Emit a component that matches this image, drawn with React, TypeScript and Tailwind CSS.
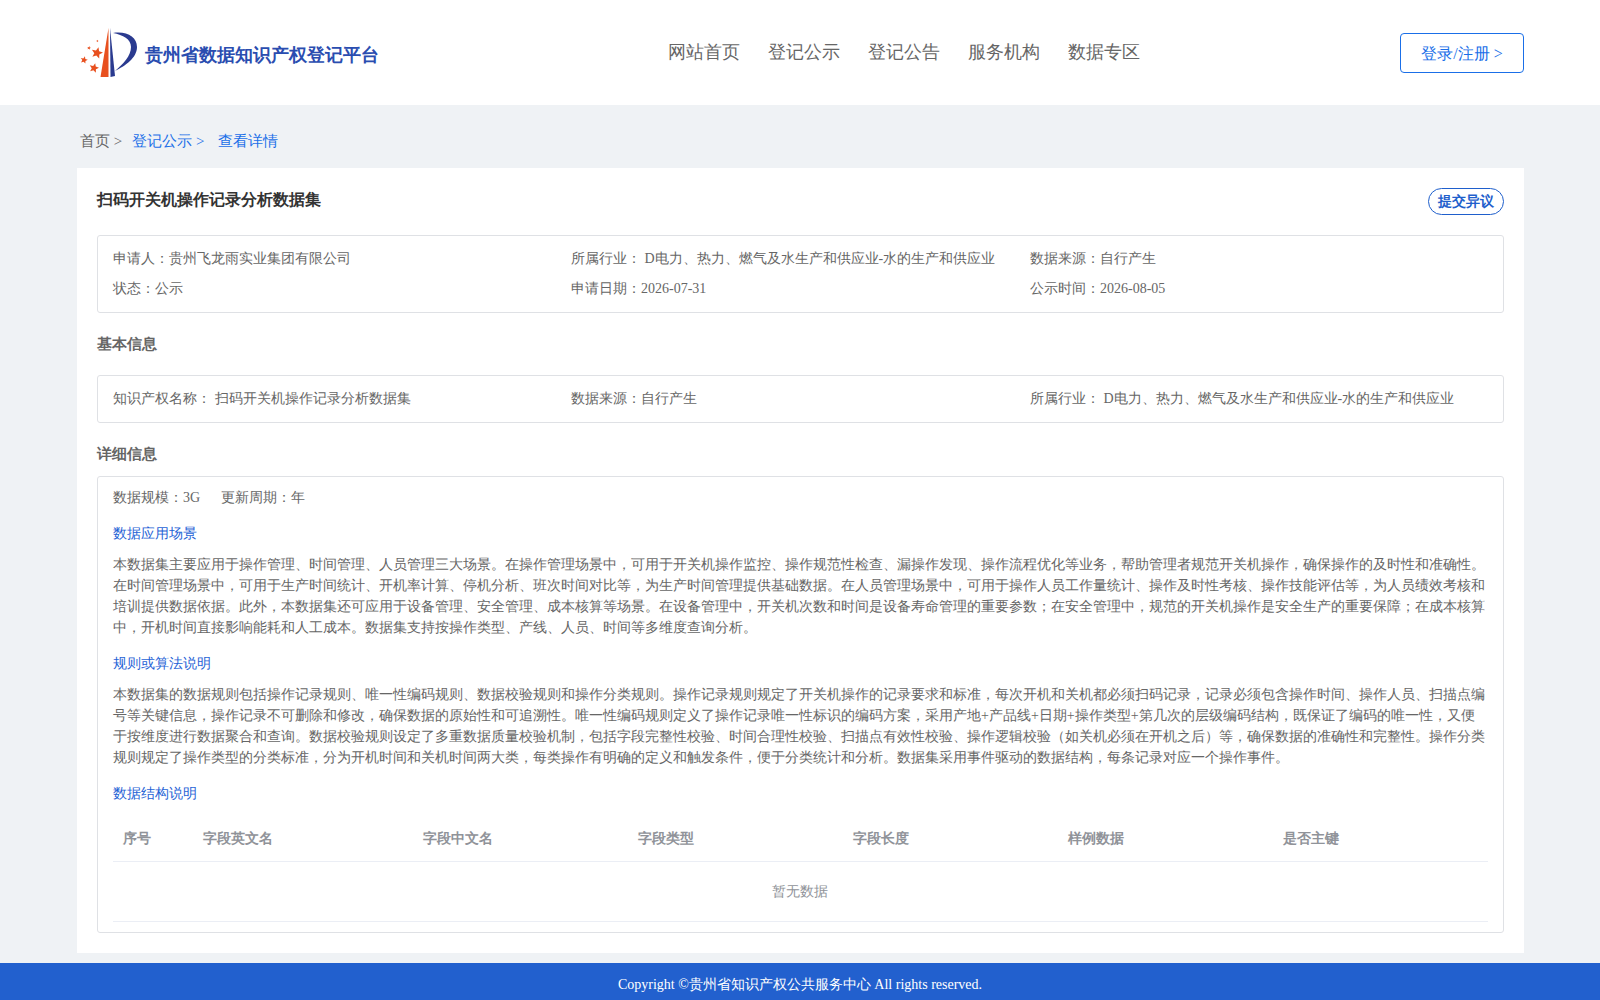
const SERIF = "font-['Liberation_Serif',serif]";

function Star({ cx, cy, r, fill = "#e8501f" }: { cx: number; cy: number; r: number; fill?: string }) {
  const pts = Array.from({ length: 10 }, (_, i) => {
    const a = -Math.PI / 2 + (i * Math.PI) / 5 + 0.25;
    const rad = i % 2 === 0 ? r : r * 0.45;
    return `${(cx + rad * Math.cos(a)).toFixed(2)},${(cy + rad * Math.sin(a)).toFixed(2)}`;
  }).join(" ");
  return <polygon points={pts} fill={fill} />;
}

function Logo() {
  return (
    <svg width="60" height="54" viewBox="0 0 60 54" className="shrink-0">
      <Star cx={17} cy={26} r={6} />
      <Star cx={4} cy={33} r={3.8} />
      <Star cx={14} cy={41} r={5} />
      <Star cx={9} cy={21} r={2} />
      <Star cx={17.5} cy={14} r={1.3} />
      <path d="M28.5 1 L20.5 50 L28.5 50 Z" fill="#e8501f" />
      <path d="M30 1 L30.5 50 L35 49 Z" fill="#2a3a8f" />
      <path d="M33 6 C47 4 57 10 57 20 C57 31 45 39 35 44 C43 37 51 29 51 20 C51 12 43 8 33 6 Z" fill="#2a3a8f" />
    </svg>
  );
}

function Section({ children }: { children: React.ReactNode }) {
  return <div className="text-[14px] leading-[21px] text-[#1f63d6]">{children}</div>;
}

const columns = ["序号", "字段英文名", "字段中文名", "字段类型", "字段长度", "样例数据", "是否主键"];

export default function App() {
  return (
    <div className={`min-h-[1000px] h-[1000px] overflow-hidden bg-[#eff2f5] flex flex-col ${SERIF}`}>
      <header className="h-[105px] shrink-0 bg-white flex items-center justify-between pl-[80px] pr-[76px]">
        <div className="flex items-center gap-[5px] w-[330px] pt-[2px]">
          <Logo />
          <span className="text-[18px] font-bold text-[#2a4db0] leading-[26px] whitespace-nowrap pt-[3px]">贵州省数据知识产权登记平台</span>
        </div>
        <nav className="flex gap-[28px] text-[18px] text-[#666] mr-[2px] pb-[1px]">
          {["网站首页", "登记公示", "登记公告", "服务机构", "数据专区"].map((t) => (
            <span key={t}>{t}</span>
          ))}
        </nav>
        <button className="w-[124px] h-[40px] rounded-[4px] border border-[#1a6fe8] pt-[2px] text-[16px] text-[#1a6fe8] bg-white">登录/注册 &gt;</button>
      </header>

      <div className="mx-[76.5px] flex-1 flex flex-col">
        <div className="h-[63px] flex items-center pl-[3.5px] text-[15px] text-[#1a6fe8] whitespace-nowrap pt-[10px]">
          <span className="text-[#666] mr-[10px]">首页 &gt;</span>
          <span className="mr-[14px]">登记公示 &gt;</span>
          <span>查看详情</span>
        </div>

        <main className="bg-white pl-[20.5px] pr-[20px] pt-[20px] h-[785px] text-[14px] text-[#666]">
          <div className="flex justify-between items-start h-[47px]">
            <h1 className="text-[16px] font-bold text-[#333] leading-[24px]">扫码开关机操作记录分析数据集</h1>
            <button className="h-[27px] w-[76px] rounded-[14px] border border-[#1f5fcc] text-[14px] font-bold text-[#1f5fcc] bg-white">提交异议</button>
          </div>

          <div className="border border-[#dfe1e5] rounded-[3px] px-[15px] py-[8px] h-[78px] grid grid-cols-[458px_459px_1fr] leading-[30px]">
            <div>申请人：贵州飞龙雨实业集团有限公司</div>
            <div>所属行业： D电力、热力、燃气及水生产和供应业-水的生产和供应业</div>
            <div>数据来源：自行产生</div>
            <div>状态：公示</div>
            <div>申请日期：2026-07-31</div>
            <div>公示时间：2026-08-05</div>
          </div>

          <h2 className="text-[15px] font-bold mt-[20px] mb-[20px] leading-[22px]">基本信息</h2>

          <div className="border border-[#dfe1e5] rounded-[3px] px-[15px] pb-[1px] h-[48px] grid grid-cols-[458px_459px_1fr] items-center">
            <div>知识产权名称： 扫码开关机操作记录分析数据集</div>
            <div>数据来源：自行产生</div>
            <div>所属行业： D电力、热力、燃气及水生产和供应业-水的生产和供应业</div>
          </div>

          <h2 className="text-[15px] font-bold mt-[20px] mb-[11px] leading-[22px]">详细信息</h2>

          <div className="border border-[#dfe1e5] rounded-[3px] px-[15px] h-[457px] leading-[21px]">
            <div className="flex gap-[21px] mt-[10px]">
              <span>数据规模：3G</span>
              <span>更新周期：年</span>
            </div>
            <div className="mt-[15px]"><Section>数据应用场景</Section></div>
            <p className="mt-[10px]">
              本数据集主要应用于操作管理、时间管理、人员管理三大场景。在操作管理场景中，可用于开关机操作监控、操作规范性检查、漏操作发现、操作流程优化等业务，帮助管理者规范开关机操作，确保操作的及时性和准确性。在时间管理场景中，可用于生产时间统计、开机率计算、停机分析、班次时间对比等，为生产时间管理提供基础数据。在人员管理场景中，可用于操作人员工作量统计、操作及时性考核、操作技能评估等，为人员绩效考核和培训提供数据依据。此外，本数据集还可应用于设备管理、安全管理、成本核算等场景。在设备管理中，开关机次数和时间是设备寿命管理的重要参数；在安全管理中，规范的开关机操作是安全生产的重要保障；在成本核算中，开机时间直接影响能耗和人工成本。数据集支持按操作类型、产线、人员、时间等多维度查询分析。
            </p>
            <div className="mt-[15px]"><Section>规则或算法说明</Section></div>
            <p className="mt-[10px]">
              本数据集的数据规则包括操作记录规则、唯一性编码规则、数据校验规则和操作分类规则。操作记录规则规定了开关机操作的记录要求和标准，每次开机和关机都必须扫码记录，记录必须包含操作时间、操作人员、扫描点编号等关键信息，操作记录不可删除和修改，确保数据的原始性和可追溯性。唯一性编码规则定义了操作记录唯一性标识的编码方案，采用产地+产品线+日期+操作类型+第几次的层级编码结构，既保证了编码的唯一性，又便于按维度进行数据聚合和查询。数据校验规则设定了多重数据质量校验机制，包括字段完整性校验、时间合理性校验、扫描点有效性校验、操作逻辑校验（如关机必须在开机之后）等，确保数据的准确性和完整性。操作分类规则规定了操作类型的分类标准，分为开机时间和关机时间两大类，每类操作有明确的定义和触发条件，便于分类统计和分析。数据集采用事件驱动的数据结构，每条记录对应一个操作事件。
            </p>
            <div className="mt-[15px]"><Section>数据结构说明</Section></div>

            <div className="mt-[12px]">
              <div className="grid grid-cols-[80px_220px_215px_215px_215px_215px_1fr] h-[46px] pb-[1px] items-center border-b border-[#ebeef5] font-bold text-[#909399]">
                {columns.map((c) => (
                  <div key={c} className="pl-[10px]">{c}</div>
                ))}
              </div>
              <div className="h-[60px] flex items-center justify-center border-b border-[#ebeef5] text-[#909399]">暂无数据</div>
            </div>
          </div>
        </main>
      </div>

      <footer className="h-[37px] shrink-0 bg-[#2260ce] text-white text-[14px] text-center leading-[44px]">
        Copyright ©贵州省知识产权公共服务中心 All rights reserved.
      </footer>
    </div>
  );
}
